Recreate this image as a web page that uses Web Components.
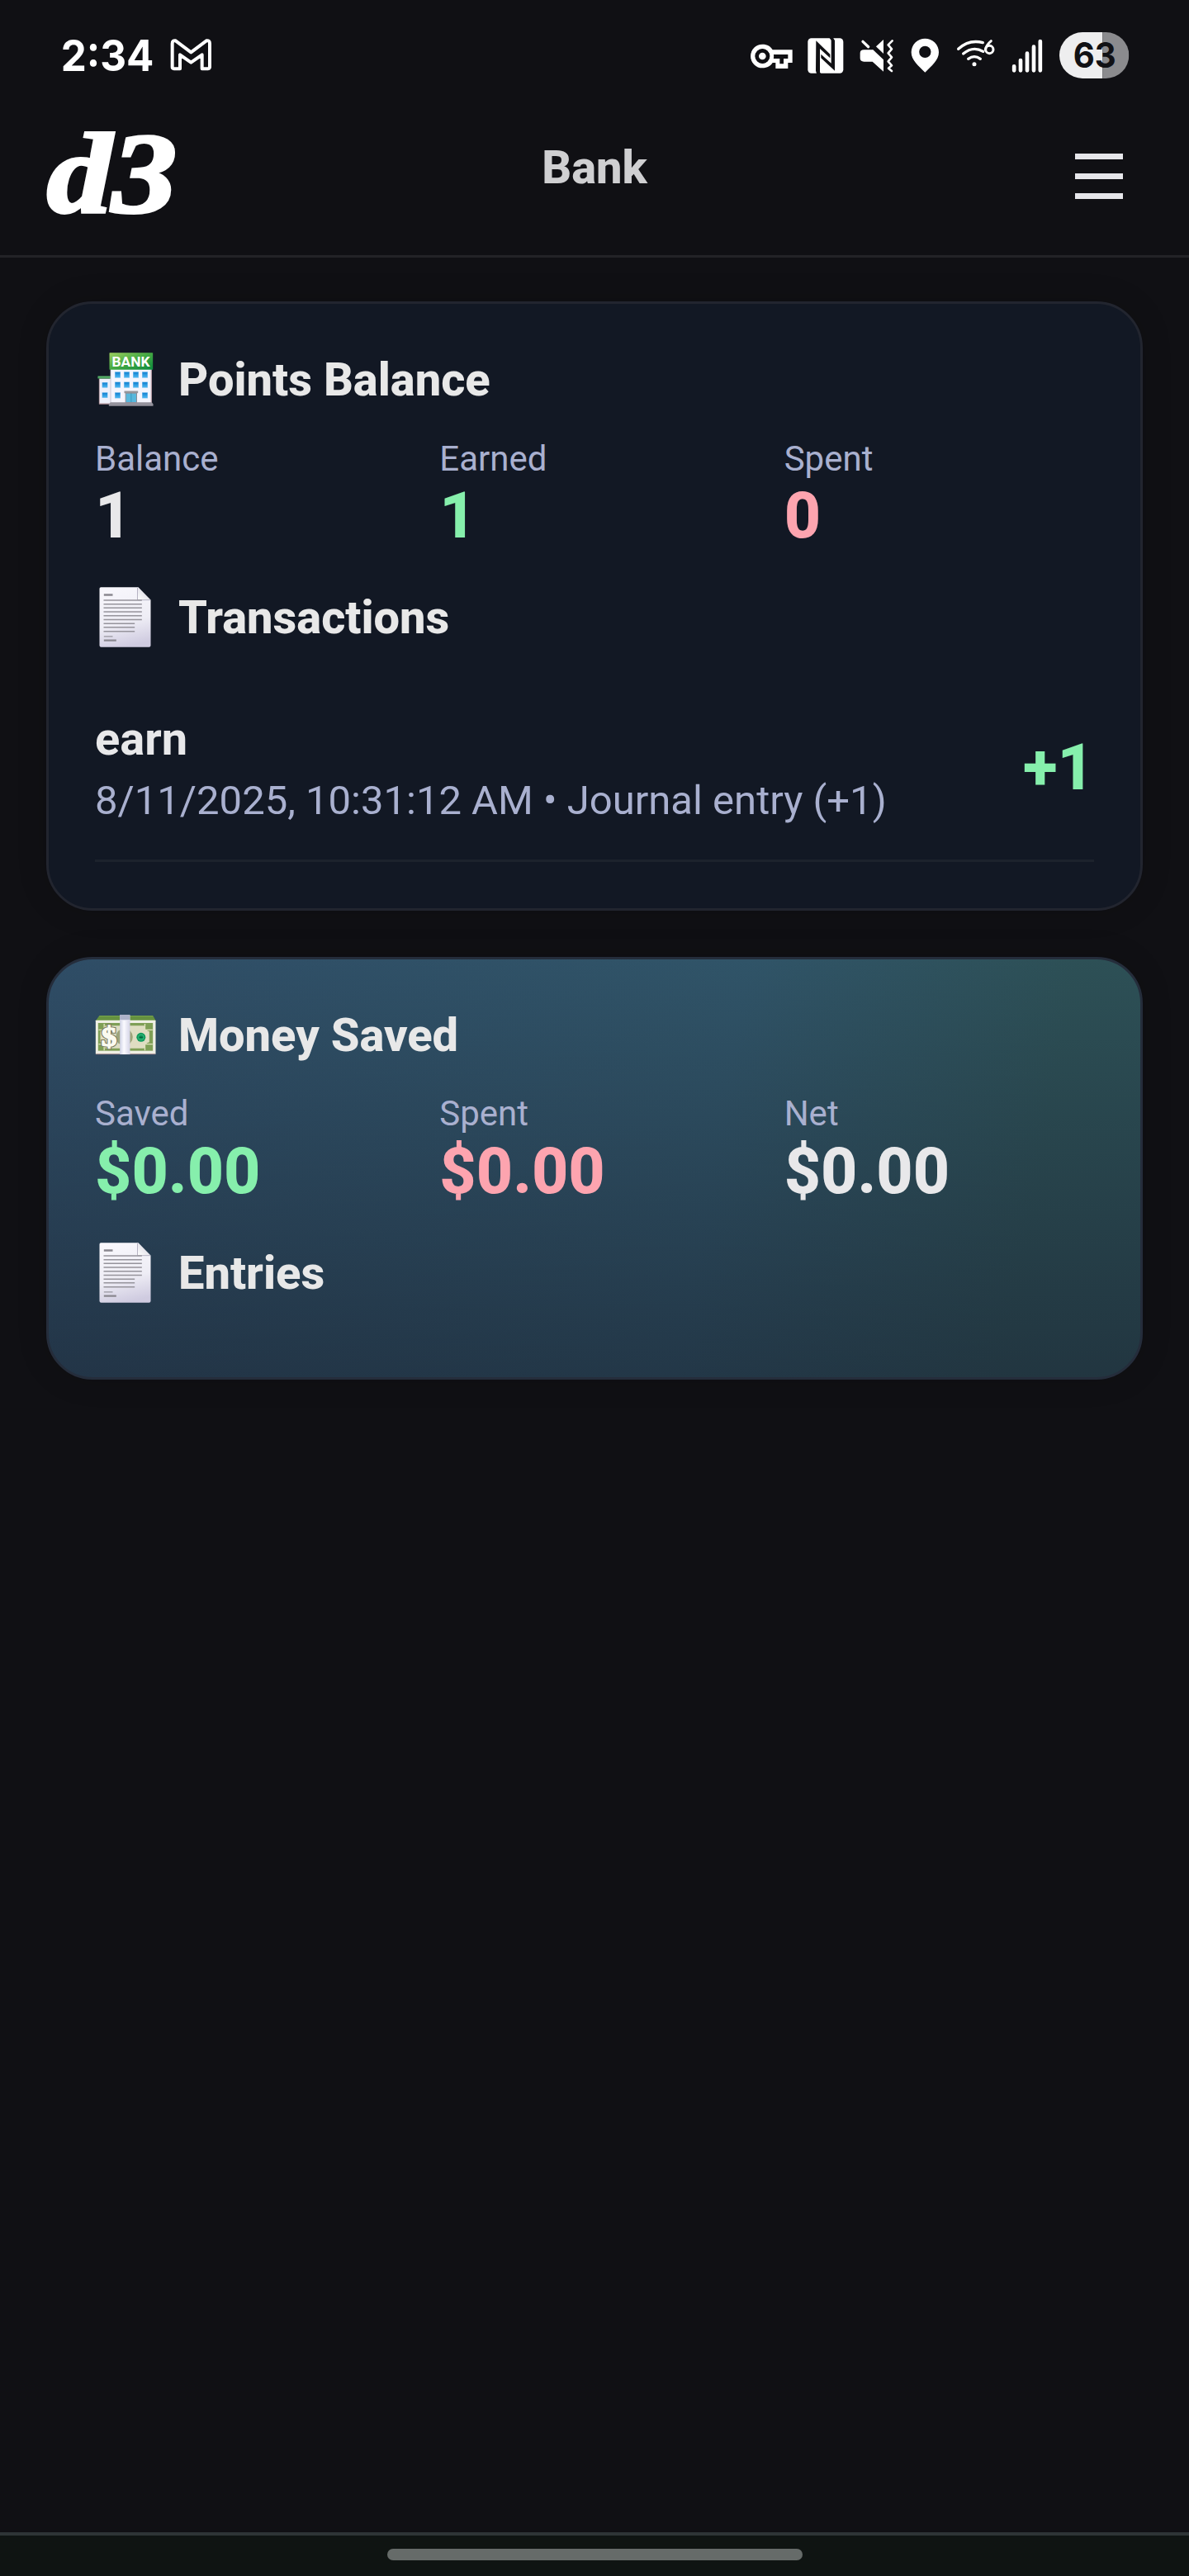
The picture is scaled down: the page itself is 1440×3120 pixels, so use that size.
<!DOCTYPE html>
<html lang="en">
<head>
<meta charset="utf-8">
<title>Bank</title>
<style>
html,body{margin:0;padding:0;background:#101014}
body{font-family:Roboto,"Noto Sans",sans-serif;color:#e8e8ea;width:1440px;height:3120px;overflow:hidden}
</style>
</head>
<body>
<bank-app></bank-app>
<script>
const define = (name, html, setup) => {
  const t = document.createElement('template');
  t.innerHTML = html;
  customElements.define(name, class extends HTMLElement {
    constructor() {
      super();
      this.attachShadow({mode: 'open'}).appendChild(t.content.cloneNode(true));
    }
    connectedCallback() { if (setup) setup(this, this.shadowRoot); }
  });
};

const ICONS = {
  bank: `<svg viewBox="46.5 73.5 219 219">
    <defs><linearGradient id="g" x1="0" y1="0" x2="1" y2="1"><stop offset="0" stop-color="#9fd160"/><stop offset=".5" stop-color="#43a843"/><stop offset="1" stop-color="#0b8a3c"/></linearGradient>
    <linearGradient id="w" x1="0" y1="0" x2="0" y2="1"><stop offset="0" stop-color="#0f7fd0"/><stop offset="1" stop-color="#4fb9f2"/></linearGradient></defs>
    <rect x="62" y="176" width="42" height="93" fill="#eef0fa" stroke="#b98e93" stroke-width="2"/>
    <rect x="57" y="168" width="46" height="8" fill="#5bb56b"/><rect x="57" y="174" width="46" height="3" fill="#2c7d49"/>
    <rect x="103" y="140" width="149" height="126" fill="#f5f5fd"/>
    <path d="M251 144V266" stroke="#c9a5ad" stroke-width="3"/><path d="M104 146V266" stroke="#bfc0cf" stroke-width="2"/>
    <rect x="99" y="83" width="158" height="62" rx="2" fill="url(#g)"/>
    <text x="108" y="133" font-family="Roboto" font-weight="700" font-size="51" textLength="138" lengthAdjust="spacingAndGlyphs" fill="#fff">BANK</text>
    <g fill="url(#w)" stroke="#8ec7ee" stroke-width="1">
    <rect x="119" y="153" width="20" height="21"/><rect x="152" y="153" width="20" height="21"/><rect x="185" y="153" width="20" height="21"/><rect x="218" y="153" width="20" height="21"/>
    <rect x="119" y="190" width="20" height="20"/><rect x="152" y="190" width="20" height="20"/><rect x="185" y="190" width="20" height="20"/><rect x="218" y="190" width="20" height="20"/>
    <rect x="119" y="228" width="20" height="20"/><rect x="218" y="228" width="20" height="20"/>
    <rect x="73" y="191" width="19" height="19"/><rect x="73" y="228" width="19" height="19"/></g>
    <rect x="153" y="222" width="50" height="8" fill="#98979c"/>
    <rect x="158" y="230" width="40" height="34" fill="#58b7dc" stroke="#8b8c96" stroke-width="3"/><path d="M178 230V264" stroke="#2e89ad" stroke-width="2"/>
    <path d="M103 263H253L258 270V277H97V270Z" fill="#94929c"/><path d="M62 269H99" stroke="#9a8088" stroke-width="3"/></svg>`,
  doc: `<svg viewBox="46.5 55 219 219">
    <defs><linearGradient id="p" x1=".3" y1="0" x2=".5" y2="1"><stop offset="0" stop-color="#f8f7fc"/><stop offset=".6" stop-color="#eeedf5"/><stop offset="1" stop-color="#cfcbe0"/></linearGradient>
    <linearGradient id="f" x1="0" y1="1" x2="1" y2="0"><stop offset="0" stop-color="#fff"/><stop offset="1" stop-color="#cfcdda"/></linearGradient></defs>
    <path d="M68 53H204L249 99V264Q249 270 243 270H69Q63 270 63 264V58Q63 53 68 53Z" fill="url(#p)"/>
    <path d="M201 53L249 99H201Z" fill="url(#f)"/><path d="M201 54V99H247" fill="none" stroke="#aaa6b8" stroke-width="2.5"/>
    <g fill="none" stroke="#96949c" stroke-width="4.5"><path d="M78 100H217M78 114.500H217M78 128H217M78 142H217M78 156H217M78 170.500H217M78 184.500H191M78 198.500H191M78 213H191"/><path d="M79 80.500H111M79 246H124" stroke="#8a8890" stroke-width="7"/><path d="M79 231.500H111" stroke="#aaa8b2" stroke-width="5"/></g></svg>`,
  money: `<svg viewBox="46.5 30 219 219">
    <defs><linearGradient id="b" x1="0" x2="1"><stop offset="0" stop-color="#cfd2e6"/><stop offset=".4" stop-color="#fbfbff"/><stop offset="1" stop-color="#d4d4e6"/></linearGradient></defs>
    <path d="M63 66H257L267 84H50Z" fill="#6d9a45"/><path d="M58 74H262M55 79H265" stroke="#557f37" stroke-width="1.500"/>
    <rect x="49" y="83" width="218" height="124" rx="2" fill="#efefe4"/><path d="M50 206H266" stroke="#a0878b" stroke-width="3"/>
    <rect x="58" y="93" width="199" height="101" fill="#7f9f56"/>
    <path d="M84 103H226Q226 120 244 124V163Q226 167 226 185H84Q82 169 66 163V124Q82 120 84 103Z" fill="#dfddc2"/>
    <path d="M228 96V118H256M228 193V170H256M60 118H80V96M60 170H80V193" fill="none" stroke="#dfe2bd" stroke-width="4"/>
    <circle cx="153" cy="144" r="31" fill="#9ea47a"/><circle cx="214" cy="145" r="16.500" fill="#0f9a5b"/><circle cx="214" cy="145" r="10" fill="none" stroke="#38b980" stroke-width="3"/><path d="M208 145H220" stroke="#075b3a" stroke-width="4"/>
    <g font-family="Liberation Serif" font-size="99"><text x="70" y="177" textLength="56" lengthAdjust="spacingAndGlyphs" fill="#fbfaf0" stroke="#77775a" stroke-width="10" paint-order="stroke">$</text><text x="70" y="177" textLength="56" lengthAdjust="spacingAndGlyphs" fill="#fbfaf0" stroke="#fbfaf0" stroke-width="4" aria-hidden="true">$</text></g>
    <rect x="137" y="64" width="37" height="143" fill="url(#b)"/><path d="M137 83V63H173V83Z" fill="#aeb3c9"/><path d="M137 83H174" stroke="#f1f1fb" stroke-width="2"/></svg>`
};

define('status-bar', `<style>
:host{display:flex;justify-content:space-between;height:56px;padding:39px 73px 0 75px;color:#fff}
div{display:flex}
svg{display:block;height:56px;overflow:visible}
text{font-family:Inter,sans-serif}
</style>
<div><svg width="185" viewBox="105 57 555 168" fill="none">
<text x="101" y="198" font-weight="750" font-size="158" fill="#fff" textLength="338" lengthAdjust="spacingAndGlyphs">2:34</text>
<path d="M512 189.500Q506 189.500 506 184V98Q506 86 518 88L574 130L630 88Q642 86 642 98V184Q642 189.500 636 189.500H614V139L574 167L534 139V189.500Z" stroke="#fff" stroke-width="12" stroke-linejoin="round"/></svg></div>
<div>
<svg width="62" viewBox="50 57 186 168"><path fill="#fff" fill-rule="evenodd" d="M99 101C117 101 130 109 136 121H208V168H192V189H147V168H136C130 179 117 187 99 187A42.500 43 0 0 1 99 101ZM99 117A26 27 0 1 0 99 171C114 171 122 164 125 153H162V172H176V153H192V138H125C122 126 113 117 99 117Z"/><circle cx="99" cy="144" r="34" fill="none" stroke="#fff" stroke-width="15"/><circle cx="99" cy="144" r="20" fill="none" stroke="#101014" stroke-width="14"/><circle cx="99" cy="144" r="13" fill="#fff"/></svg>
<svg width="62.67" viewBox="236 57 188 168"><rect x="264" y="79" width="129" height="127" rx="13" fill="#fff"/><path d="M294 88L345 137V151L308 117V203L316 211H297L293 197Z" fill="#101014"/><path d="M341 76H355L362 87V197L312 151V137L349 170V86Z" fill="#101014"/></svg>
<svg width="61.67" viewBox="424 57 185 168"><path d="M541 84V200L501 164H470Q456 164 456 151V133Q456 121 470 121H501Z" fill="#fff"/><path d="M476 84L556 160" stroke="#101014" stroke-width="16"/><path d="M466 91L486 110" stroke="#fff" stroke-width="10" stroke-linecap="round"/><path d="M573 88L558 103L571 118L558 133L571 148L558 163L571 178L559 188L571 198" fill="none" stroke="#fff" stroke-width="8" stroke-linejoin="round" stroke-linecap="round"/></svg>
<svg width="54.67" viewBox="609 57 164 168"><path fill-rule="evenodd" fill="#fff" d="M691 80A50 50 0 0 1 741 130C741 158 715 180 691 203C667 180 641 158 641 130A50 50 0 0 1 691 80ZM691 107A21.500 21.500 0 1 0 691 150A21.500 21.500 0 1 0 691 107Z"/></svg>
<svg width="67.33" viewBox="773 57 202 168" fill="none" stroke="#fff" stroke-width="10" stroke-linecap="round"><path d="M811 118Q850 82 900 95M829 135Q864 106 901 127M847 154Q869 138 891 154"/><circle cx="869" cy="173" r="7.500" fill="#fff" stroke="none"/><path d="M930 89Q912 104 909 121" stroke-width="9"/><ellipse cx="924" cy="120" rx="14" ry="14" stroke-width="9"/></svg>
<svg width="57.67" viewBox="975 57 173 168" stroke="#fff" stroke-width="14" stroke-linecap="round"><path d="M1014.500 181V196M1038 159V196M1062 134V196M1086 110V196M1109.500 90V196"/></svg>
<svg width="94.33" viewBox="1148 57 283 168"><defs><clipPath id="c"><rect x="1178" y="57" width="253" height="168" rx="84"/></clipPath></defs><g clip-path="url(#c)"><path d="M1178 57H1335V225H1178Z" fill="#eeeeef"/><path d="M1335 57H1431V225H1335Z" fill="#8b8b8e"/></g><text x="1228" y="186" font-weight="650" font-size="128" fill="#111115" textLength="156" lengthAdjust="spacingAndGlyphs">63</text></svg>
</div>`);

define('app-header', `<style>
:host{display:grid;grid-template-columns:1fr auto 1fr;align-items:start;box-sizing:border-box;height:217px;padding:0 80px 0 56px;border-bottom:3.500px solid #232327}
.logo{margin-top:58px;display:block;overflow:visible}
h1{margin:76px 0 0 24px;font-size:56px;line-height:65px;font-weight:800;color:#cfcfd1}
button{all:unset;justify-self:end;display:flex;flex-direction:column;gap:17px;margin-top:91px}
i{display:block;width:58px;height:7px;background:#e6e6ea}
</style>
<svg class="logo" width="170" height="120" viewBox="0 0 170 120"><text y="104" x="1" font-family="Liberation Serif" font-weight="700" font-style="italic" font-size="138" fill="#fff" stroke="#fff" stroke-width="4" textLength="157" lengthAdjust="spacingAndGlyphs">d3</text></svg>
<h1><slot></slot></h1>
<button aria-label="Menu"><i></i><i></i><i></i></button>`);

define('section-title', `<style>
:host{display:flex;align-items:center;gap:28px;height:73px;font-size:56px;line-height:73px;font-weight:800;color:#e8e8e8}
.i{width:73px;height:73px}
svg{display:block;width:73px;height:73px;overflow:visible}
</style><span class="i"></span><span><slot></slot></span>`,
(h, r) => { r.querySelector('.i').innerHTML = ICONS[h.getAttribute('icon')]; });

define('stat-row', `<style>
:host{display:grid;grid-template-columns:repeat(3,1fr);gap:42px;margin:33.500px 0 42px}
</style><slot></slot>`);

define('stat-item', `<style>
:host{display:block;color:#e8e8ea}
:host([tone=good]){color:#86efac}
:host([tone=bad]){color:#fda4af}
.l{font-size:42px;line-height:49.500px;color:#a9b0cf}
.v{font-size:77px;line-height:90px;font-weight:800}
</style><div class="l"></div><div class="v"><slot></slot></div>`,
(h, r) => { r.querySelector('.l').textContent = h.getAttribute('label'); });

define('bank-card', `<style>
:host{display:block;box-sizing:border-box;border:3.500px solid #22252f;border-radius:56px;padding:56px;background:#121824;box-shadow:0 0 36px rgba(0,0,0,.16)}
:host([tone=money]){padding-bottom:89px;border-color:#252d3b;background:linear-gradient(180deg,rgba(26,36,48,0) 0%,rgba(26,36,50,.6) 100%) border-box,linear-gradient(100deg,#2f4d66 0%,#305468 60%,#2d5056 88%) border-box}
</style><slot></slot>`);

define('transaction-row', `<style>
:host{display:flex;align-items:center;justify-content:space-between;margin-top:77px;padding-bottom:42px;border-bottom:3.500px solid #1c222c}
.t{font-size:56px;line-height:66px;font-weight:700;color:#e8e8ea}
.m{margin-top:13px;font-size:49px;line-height:57.500px;color:#a9b0cf}
.a{font-size:77px;line-height:90px;font-weight:800;color:#86efac}
</style><div><div class="t"><slot name="kind"></slot></div><div class="m"><slot></slot></div></div><div class="a"><slot name="amount"></slot></div>`);

define('nav-bar', `<style>
:host{display:flex;justify-content:center;box-sizing:border-box;height:53px;border-top:4px solid #2e3436;background:#0f1412;padding-top:16px}
i{display:block;width:503px;height:14px;border-radius:7px;background:#666b69}
</style><i></i>`);

define('bank-app', `<style>
:host{display:flex;flex-direction:column;height:3120px;background:#101014}
main{flex:1;display:flex;flex-direction:column;gap:56px;padding:53px 56px 0}
</style>
<status-bar></status-bar>
<app-header>Bank</app-header>
<main>
<bank-card>
<section-title icon="bank">Points Balance</section-title>
<stat-row><stat-item label="Balance">1</stat-item><stat-item label="Earned" tone="good">1</stat-item><stat-item label="Spent" tone="bad">0</stat-item></stat-row>
<section-title icon="doc">Transactions</section-title>
<transaction-row><span slot="kind">earn</span>8/11/2025, 10:31:12 AM • Journal entry (+1)<span slot="amount">+1</span></transaction-row>
</bank-card>
<bank-card tone="money">
<section-title icon="money">Money Saved</section-title>
<stat-row><stat-item label="Saved" tone="good">$0.00</stat-item><stat-item label="Spent" tone="bad">$0.00</stat-item><stat-item label="Net">$0.00</stat-item></stat-row>
<section-title icon="doc">Entries</section-title>
</bank-card>
</main>
<nav-bar></nav-bar>`);
</script>
</body>
</html>
